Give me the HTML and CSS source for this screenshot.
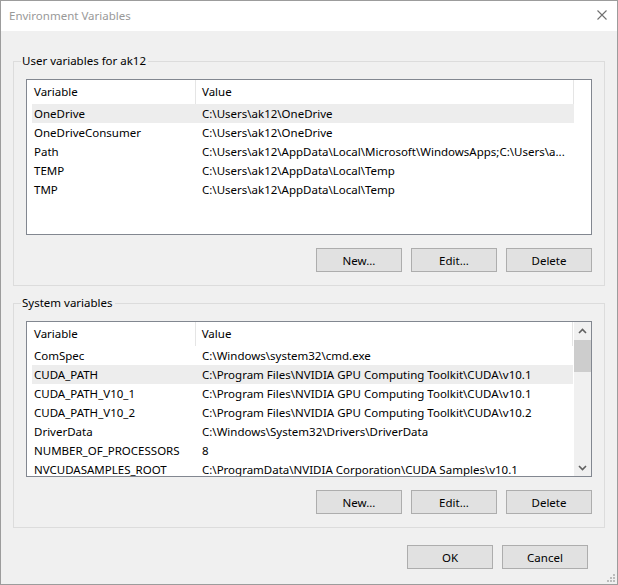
FILE: index.html
```html
<!DOCTYPE html>
<html lang="en">
<head>
  <meta charset="UTF-8"/>
  <title>Environment Variables</title>
  <link rel="stylesheet" href="styles.css">
</head>
<body>
  <div class="window">
    <div class="titlebar">
      <span class="title">Environment Variables</span>
      <svg class="close" width="10" height="10" viewBox="0 0 10 10"><path d="M0.5 0.5L9.5 9.5M9.5 0.5L0.5 9.5" stroke="#707070" stroke-width="1.1" fill="none"/></svg>
    </div>
    <div class="content">
      <div class="group">
        <div class="group-title">User variables for ak12</div>
        <div class="list">
          <div class="list-main">
            <div class="list-head"><div class="head-var">Variable</div><div class="head-val">Value</div></div>
            <div class="row selected"><span class="c1">OneDrive</span><span class="c2">C:\Users\ak12\OneDrive</span></div>
            <div class="row"><span class="c1">OneDriveConsumer</span><span class="c2">C:\Users\ak12\OneDrive</span></div>
            <div class="row"><span class="c1">Path</span><span class="c2">C:\Users\ak12\AppData\Local\Microsoft\WindowsApps;C:\Users\a...</span></div>
            <div class="row"><span class="c1">TEMP</span><span class="c2">C:\Users\ak12\AppData\Local\Temp</span></div>
            <div class="row"><span class="c1">TMP</span><span class="c2">C:\Users\ak12\AppData\Local\Temp</span></div>
          </div>
        </div>
        <div class="buttons">
          <button>New...</button>
          <button>Edit...</button>
          <button>Delete</button>
        </div>
      </div>

      <div class="group system">
        <div class="group-title">System variables</div>
        <div class="list">
          <div class="list-main">
            <div class="list-head"><div class="head-var">Variable</div><div class="head-val">Value</div></div>
            <div class="row"><span class="c1">ComSpec</span><span class="c2">C:\Windows\system32\cmd.exe</span></div>
            <div class="row selected"><span class="c1">CUDA_PATH</span><span class="c2">C:\Program Files\NVIDIA GPU Computing Toolkit\CUDA\v10.1</span></div>
            <div class="row"><span class="c1">CUDA_PATH_V10_1</span><span class="c2">C:\Program Files\NVIDIA GPU Computing Toolkit\CUDA\v10.1</span></div>
            <div class="row"><span class="c1">CUDA_PATH_V10_2</span><span class="c2">C:\Program Files\NVIDIA GPU Computing Toolkit\CUDA\v10.2</span></div>
            <div class="row"><span class="c1">DriverData</span><span class="c2">C:\Windows\System32\Drivers\DriverData</span></div>
            <div class="row"><span class="c1">NUMBER_OF_PROCESSORS</span><span class="c2">8</span></div>
            <div class="row"><span class="c1">NVCUDASAMPLES_ROOT</span><span class="c2">C:\ProgramData\NVIDIA Corporation\CUDA Samples\v10.1</span></div>
          </div>
          <div class="scrollbar">
            <div class="arrow"><svg width="9" height="6" viewBox="0 0 9 6"><path d="M1 5L4.5 1.5L8 5" stroke="#606060" stroke-width="1.6" fill="none"/></svg></div>
            <div class="track"><div class="thumb"></div></div>
            <div class="arrow"><svg width="9" height="6" viewBox="0 0 9 6"><path d="M1 1L4.5 4.5L8 1" stroke="#606060" stroke-width="1.6" fill="none"/></svg></div>
          </div>
        </div>
        <div class="buttons">
          <button>New...</button>
          <button>Edit...</button>
          <button>Delete</button>
        </div>
      </div>

      <div class="footer">
        <button>OK</button>
        <button>Cancel</button>
      </div>
    </div>

    <!-- resize grip in the corner -->
    <svg class="grip" width="8" height="8" viewBox="0 0 8 8" fill="#bcbcbc">
      <rect x="6" y="0" width="2" height="2"/>
      <rect x="3" y="3" width="2" height="2"/><rect x="6" y="3" width="2" height="2"/>
      <rect x="0" y="6" width="2" height="2"/><rect x="3" y="6" width="2" height="2"/><rect x="6" y="6" width="2" height="2"/>
    </svg>
  </div>
</body>
</html>
```

FILE: styles.css
```css
body { margin:0; font-family:"Segoe UI", "Noto Sans", sans-serif; font-size:11.5px; color:#000; }
.window { position:relative; width:618px; height:585px; box-sizing:border-box; border:1px solid #9c9c9c; background:#f0f0f0; display:flex; flex-direction:column; }
.titlebar { height:30px; background:#fff; display:flex; justify-content:space-between; align-items:flex-start; flex-shrink:0; }
.title { color:#999; padding-left:8px; line-height:30px; }
.close { margin:9px 10px 0 0; }
.content { padding:0 12px; }

.group { border:1px solid #dcdcdc; margin-top:30px; padding:0 12px 13px; }
.group.system { margin-top:17px; }
.group-title { width:max-content; margin:-9px 0 0 -5px; padding:0 2px 0 1px; line-height:16px; background:#f0f0f0; }

.list { margin-top:10px; height:156px; box-sizing:border-box; border:1px solid #828790; background:#fff; display:flex; overflow:hidden; }
.list-main { flex:1; overflow:hidden; }
.list-head { display:flex; height:24px; line-height:23px; }
.head-var { width:161px; padding-left:7px; border-right:1px solid #e5e5e5; }
.head-val { width:371px; padding-left:6px; border-right:1px solid #e5e5e5; }
.row { display:grid; grid-template-columns:168px 370px; height:19px; line-height:19px; margin-left:5px; width:542px; padding-left:2px; box-sizing:border-box; white-space:nowrap; }
.row .c2 { overflow:hidden; text-overflow:ellipsis; }
.row.selected { background:#ededed; }

.scrollbar { width:17px; margin-left:1px; background:#f0f0f0; display:flex; flex-direction:column; }
.arrow { height:17px; display:flex; align-items:center; justify-content:center; }
.track { flex:1; }
.thumb { height:32px; margin-top:1px; background:#cdcdcd; }

.buttons { display:flex; justify-content:flex-end; gap:9px; margin-top:13px; }
button { width:86px; height:24px; padding:0; font:inherit; color:#000; background:#e1e1e1; border:1px solid #adadad; }
.footer { display:flex; justify-content:flex-end; gap:9px; margin-top:17px; padding-right:17px; }

.grip { position:absolute; right:2px; bottom:2px; }
```
